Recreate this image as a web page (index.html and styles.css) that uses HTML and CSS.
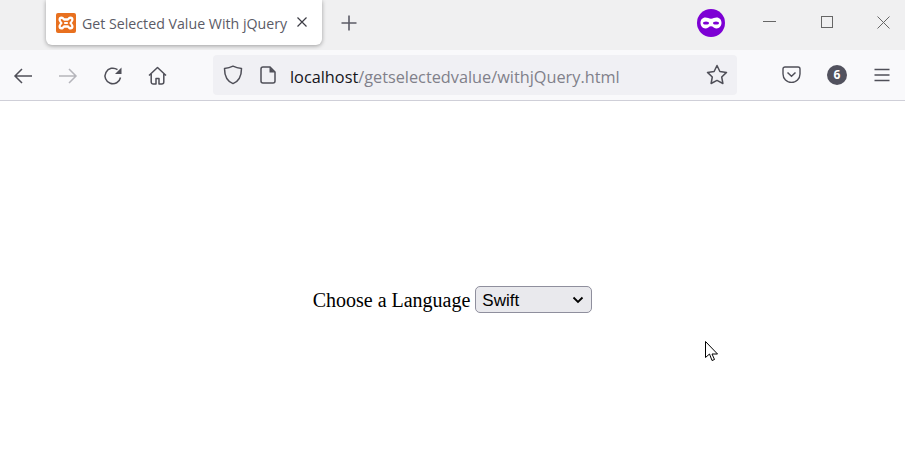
FILE: index.html
```html
<!DOCTYPE html>
<html lang="en">
<head>
<meta charset="utf-8">
<title>Get Selected Value With jQuery</title>
<link rel="stylesheet" href="styles.css">
</head>
<body>
<div class="tabbar">
  <div class="tab">
    <svg class="favicon" width="20" height="20" viewBox="0 0 20 20"><rect width="20" height="20" rx="2" fill="#e8701f"/><path d="M5.500 3.500c1.500 0 2.300 1 3 1.800h3c.7-.8 1.500-1.800 3-1.800 2 0 3 1.300 3 3 0 1.400-.8 2.400-1.800 3.500 1 1.100 1.800 2.100 1.800 3.500 0 1.700-1 3-3 3-1.500 0-2.300-1-3-1.800h-3c-.7.800-1.500 1.800-3 1.800-2 0-3-1.300-3-3 0-1.400.8-2.400 1.800-3.500C3.300 8.900 2.500 7.900 2.500 6.500c0-1.700 1-3 3-3z" fill="#fff"/><path d="M5.500 6c.8 0 1.500.9 2.300 1.700h4.400C13 6.900 13.700 6 14.500 6c.6 0 .8.300.8.700 0 .8-1.200 2.100-2 3.300.8 1.200 2 2.500 2 3.300 0 .4-.2.700-.8.700-.8 0-1.500-.9-2.300-1.700H7.800C7 13.100 6.300 14 5.500 14c-.6 0-.8-.3-.8-.7 0-.8 1.200-2.100 2-3.300-.8-1.200-2-2.500-2-3.300 0-.4.200-.7.800-.7z" fill="#e8701f"/><rect x="8.200" y="9" width="3.600" height="2" fill="#fff"/></svg>
    <span class="tab-title">Get Selected Value With jQuery</span>
    <svg class="tab-close" width="12" height="12" viewBox="0 0 12 12"><path d="M1.500 1.500l9 9M10.500 1.500l-9 9" stroke="#3c3c44" stroke-width="1.200" fill="none"/></svg>
  </div>
  <svg class="newtab" width="16" height="16" viewBox="0 0 16 16"><path d="M8 .5v15M.5 8h15" stroke="#5b5b66" stroke-width="1.600" fill="none"/></svg>
  <div class="spacer"></div>
  <svg class="mask" width="28" height="28" viewBox="0 0 28 28"><circle cx="14" cy="14" r="14" fill="#7d00d4"/><path d="M8.500 8.500c2 0 3.500 1.200 5.500 1.200s3.500-1.200 5.500-1.200c3.200 0 5 2.300 5 5.300 0 3.200-2.200 5.700-4.800 5.700-2.400 0-3.700-2.300-5.700-2.300s-3.300 2.300-5.700 2.300c-2.600 0-4.800-2.500-4.800-5.700 0-3 1.800-5.300 5-5.300z" fill="#fff"/><ellipse cx="9" cy="14" rx="3" ry="1.600" fill="#7d00d4"/><ellipse cx="19" cy="14" rx="3" ry="1.600" fill="#7d00d4"/></svg>
  <div class="winctl">
    <svg width="13" height="12" viewBox="0 0 13 12"><path d="M0 5.500h13" stroke="#666" stroke-width="1"/></svg>
    <svg width="12" height="12" viewBox="0 0 12 12"><rect x=".5" y=".5" width="11" height="11" fill="none" stroke="#666"/></svg>
    <svg width="13" height="13" viewBox="0 0 13 13"><path d="M.5.500l12 12M12.500.500l-12 12" stroke="#666" fill="none"/></svg>
  </div>
</div>
<div class="toolbar">
  <div class="nav">
    <svg width="20" height="20" viewBox="0 0 20 20"><path d="M19 10H2M9 3l-7 7 7 7" stroke="#4f4f58" stroke-width="1.500" fill="none"/></svg>
    <svg width="20" height="20" viewBox="0 0 20 20"><path d="M1 10H18M11 3l7 7-7 7" stroke="#b5b5bb" stroke-width="1.500" fill="none"/></svg>
    <svg width="20" height="20" viewBox="0 0 20 20"><path d="M17.500 11.500A7.800 7.800 0 1 1 14.500 3.700" stroke="#4f4f58" stroke-width="1.500" fill="none"/><path d="M18.500 1.500V8h-6.500z" fill="#4f4f58"/></svg>
    <svg width="20" height="20" viewBox="0 0 20 20"><path d="M1 9.500L9.500 1.500 18 9.500M3.200 8v8a2 2 0 0 0 2 2h2.800v-5.500h3V18h2.800a2 2 0 0 0 2-2V8" stroke="#4f4f58" stroke-width="1.500" fill="none" stroke-linejoin="round"/></svg>
  </div>
  <div class="urlbar">
    <svg width="20" height="20" viewBox="0 0 20 20"><path d="M10 1.200c2.500 1.300 5 2 8.500 2.200 0 7-1.500 12.300-8.500 15.200C3 15.700 1.500 10.400 1.500 3.400 5 3.200 7.500 2.500 10 1.200z" stroke="#4f4f58" stroke-width="1.500" fill="none" stroke-linejoin="round"/></svg>
    <svg class="page-icon" width="16" height="18" viewBox="0 0 16 18"><path d="M3 1h7l5 5v9a2 2 0 0 1-2 2H3a2 2 0 0 1-2-2V3a2 2 0 0 1 2-2z" stroke="#4f4f58" stroke-width="1.500" fill="none"/><path d="M9.500 1v5.500H15" fill="#4f4f58"/></svg>
    <span class="url"><span class="host">localhost</span>/getselectedvalue/withjQuery.html</span>
    <svg class="star" width="22" height="21" viewBox="0 0 22 21"><path d="M11 1.500l2.900 6 6.600.9-4.800 4.600 1.200 6.500L11 16.400l-5.900 3.100 1.200-6.500-4.800-4.600 6.600-.9z" stroke="#4f4f58" stroke-width="1.500" fill="none" stroke-linejoin="round"/></svg>
  </div>
  <div class="actions">
    <svg width="19" height="17" viewBox="0 0 19 17"><path d="M3 1h13a2 2 0 0 1 2 2v5a8.500 8.500 0 0 1-17 0V3a2 2 0 0 1 2-2z" stroke="#4f4f58" stroke-width="1.400" fill="none"/><path d="M5.500 6.500l4 3.800 4-3.800" stroke="#4f4f58" stroke-width="1.500" fill="none"/></svg>
    <span class="badge">6</span>
    <svg class="menu" width="16" height="14" viewBox="0 0 16 14"><path d="M.5 1.500h15M.5 7h15M.5 12.500h15" stroke="#4f4f58" stroke-width="1.500" fill="none"/></svg>
  </div>
</div>
<main class="page">
  <label class="field" for="lang">Choose a Language</label>
  <div class="select-wrap">
    <select id="lang" class="select">
      <option>Swift</option>
      <option>JavaScript</option>
      <option>Python</option>
    </select>
    <svg class="chevron" width="12" height="8" viewBox="0 0 12 8"><path d="M1.500 1.500l4.500 4.500 4.500-4.500" stroke="#000" stroke-width="1.800" fill="none"/></svg>
  </div>
  <svg class="cursor" width="14" height="21" viewBox="0 0 14 21"><path d="M.5.500v16l4-3.500 2.500 6.500 2.500-1-2.500-5.500h5.500z" fill="#fff" stroke="#000" stroke-width="1"/></svg>
</main>
</body>
</html>
```
FILE: styles.css
```css
* { box-sizing: border-box; }
html, body { margin: 0; height: 100%; overflow: hidden; }
body { display: flex; flex-direction: column; background: #fff; font-family: "Noto Sans", sans-serif; }
.tabbar { display: flex; align-items: flex-start; height: 50px; padding-left: 46px; background: #f0f0f1; flex: none; }
.tab { display: flex; align-items: center; width: 276px; height: 45px; padding-left: 10px; background: #fff; border-radius: 0 0 6px 6px; box-shadow: 0 1px 4px rgba(0,0,0,.35); }
.favicon { flex: none; }
.tab-title { margin-left: 6px; padding-top: 2px; font-family: "Open Sans", sans-serif; font-size: 14.2px; color: #5b5b66; white-space: nowrap; width: 208px; }
.tab-close { margin-left: 6px; margin-top: -1px; }
.newtab { margin: 15px 0 0 19px; }
.spacer { flex: 1; }
.mask { margin-top: 9px; }
.winctl { display: flex; align-items: flex-start; gap: 45px; width: 180px; padding: 16px 0 0 38px; }
.winctl svg:last-child { margin-left: -1px; }
.toolbar { display: flex; align-items: center; height: 51px; padding: 0 0 1px 13px; background: #f9f9fb; border-bottom: 1px solid #cfcfd8; flex: none; }
.nav { display: flex; align-items: center; gap: 25px; width: 200px; padding-top: 2px; }
.urlbar { display: flex; align-items: center; width: 524px; height: 40px; padding: 0 9px 0 10px; background: #f0f0f4; border-radius: 4px; }
.page-icon { margin-left: 17px; }
.url { flex: 1; margin-left: 14px; padding-top: 4px; font-family: "Open Sans", sans-serif; font-size: 16.3px; color: #80808a; white-space: nowrap; }
.host { color: #15141a; }
.actions { display: flex; align-items: center; margin-left: 45px; gap: 26px; }
.badge { display: flex; align-items: center; justify-content: center; width: 20px; height: 20px; border-radius: 50%; background: #52525e; color: #fff; font-family: "Open Sans", sans-serif; font-size: 12px; font-weight: 700; }
.menu { margin-left: 1px; }
.page { position: relative; flex: 1; display: flex; align-items: center; justify-content: center; gap: 5px; padding-top: 28px; font-family: "Liberation Serif", serif; font-size: 20px; color: #000; }
.select-wrap { position: relative; display: flex; margin-bottom: 2px; }
.select { appearance: none; width: 117px; height: 27px; padding: 2px 0 0 6px; background: #e9e9ed; border: 1px solid #8f8f9d; border-radius: 5px; font-family: "Liberation Sans", sans-serif; font-size: 17px; color: #000; }
.chevron { position: absolute; right: 8px; top: 10px; pointer-events: none; }
.cursor { position: absolute; left: 705px; top: 240px; }
```
